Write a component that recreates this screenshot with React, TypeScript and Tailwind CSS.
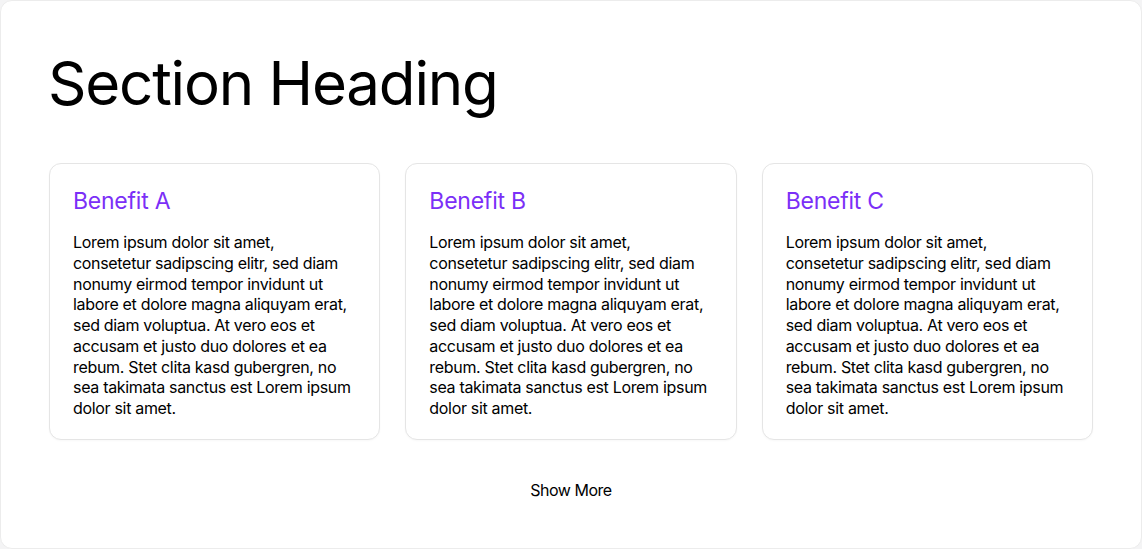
const lorem =
  "Lorem ipsum dolor sit amet, consetetur sadipscing elitr, sed diam nonumy eirmod tempor invidunt ut labore et dolore magna aliquyam erat, sed diam voluptua. At vero eos et accusam et justo duo dolores et ea rebum. Stet clita kasd gubergren, no sea takimata sanctus est Lorem ipsum dolor sit amet.";

const benefits = ["Benefit A", "Benefit B", "Benefit C"];

export default function App() {
  return (
    <div className="h-[549px] w-[1142px] bg-[#f4f4f5] font-['Inter',sans-serif] text-black">
      <section className="flex h-full flex-col rounded-xl border border-[#ececec] bg-white px-12 pt-[46px]">
        <h1 className="-ml-px text-[60px] leading-[72px] font-normal tracking-[-0.02em]">
          Section Heading
        </h1>
        <div className="mt-[44px] grid grid-cols-3 gap-[25px]">
          {benefits.map((title) => (
            <div
              key={title}
              className="rounded-xl border border-[#e5e5e5] bg-white pr-[25px] pl-[23px] pt-[23px] pb-[20px] shadow-[0_1px_2px_rgba(0,0,0,0.03)]"
            >
              <h2 className="text-[23px] leading-[28px] tracking-[-0.01em] text-[#7b2ff7]">{title}</h2>
              <p className="mt-[17px] text-[16px] leading-[20.75px] tracking-[-0.02em]">{lorem}</p>
            </div>
          ))}
        </div>
        <div className="mt-[40px] flex justify-center">
          <button className="text-[16px] leading-5 tracking-[-0.03em]">Show More</button>
        </div>
      </section>
    </div>
  );
}
